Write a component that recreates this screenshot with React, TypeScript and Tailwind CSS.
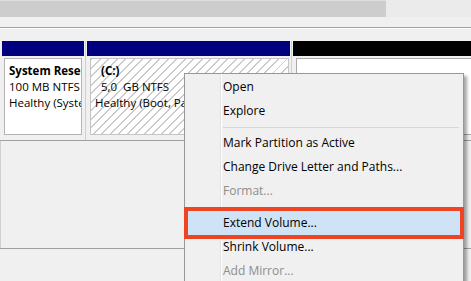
import React from 'react';

type Item = { label: string; disabled?: boolean; highlight?: boolean } | 'sep';

const menu: Item[] = [
  { label: 'Open' },
  { label: 'Explore' },
  'sep',
  { label: 'Mark Partition as Active' },
  { label: 'Change Drive Letter and Paths...' },
  { label: 'Format...', disabled: true },
  'sep',
  { label: 'Extend Volume...', highlight: true },
  { label: 'Shrink Volume...' },
  { label: 'Add Mirror...', disabled: true },
  { label: 'Delete Volume...' },
];

function ContextMenu() {
  return (
    <div className="absolute left-[184px] top-[73px] w-[280px] h-[230px] bg-[#f0f0f0] border border-[#979797] shadow-[3px_3px_3px_rgba(0,0,0,0.35)] py-px">
      {/* icon gutter line */}
      <div className="absolute left-[35px] top-0 bottom-0 w-px bg-[#e2e2e2]" />
      <div className="absolute left-[36px] top-0 bottom-0 w-px bg-white" />
      {menu.map((it, i) =>
        it === 'sep' ? (
          <div key={i} className="h-2 flex items-center pl-[38px] pr-1">
            <div className="h-px w-full bg-[#d7d7d7]" />
          </div>
        ) : (
          <div
            key={i}
            className={
              'relative h-6 flex items-center pl-[38px] text-[12px] ' +
              (it.disabled ? 'text-[#8d8d8d]' : 'text-black') +
              (it.highlight ? ' bg-[#cfe3f7]' : '')
            }
          >
            {it.label}
            {it.highlight && (
              <div className="absolute -left-px -right-px -top-1 -bottom-1 border-4 border-[#ef4424]" />
            )}
          </div>
        )
      )}
    </div>
  );
}

export default function App() {
  return (
    <div className="relative w-[471px] h-[281px] overflow-hidden bg-[#f0f0f0] font-['Open_Sans',sans-serif] leading-4 text-black">
      {/* scrollbar strip */}
      <div className="flex h-[17px]">
        <div className="w-[386px] bg-[#cdcdcd] border-t border-[#dedede]" />
        <div className="flex-1 bg-[#ebebeb]" />
      </div>
      <div className="h-[10px]" />
      <div className="h-px bg-[#a3a3a3]" />
      <div className="h-px bg-white" />
      <div className="h-[12px]" />

      {/* disk row */}
      <div className="flex h-[99px] text-[11.5px]">
        <div className="w-[2px]" />
        <div className="w-[82px] flex flex-col">
          <div className="h-[15px] bg-[#00007f]" />
          <div className="h-[2px]" />
          <div className="h-[77px] mx-[2px] bg-white border border-[#b4b4b4] pl-[4px] pt-[4px] overflow-hidden whitespace-nowrap">
            <div className="font-bold">System Reserved</div>
            <div>100 MB NTFS</div>
            <div>Healthy (System, Active, Primary Partition)</div>
          </div>
        </div>
        <div className="w-[3px] flex justify-center">
          <div className="w-px bg-[#d0d0d0]" />
        </div>
        <div className="w-[203px] flex flex-col">
          <div className="h-[15px] bg-[#00007f]" />
          <div className="h-[2px]" />
          <div className="h-[77px] ml-[3px] mr-px border border-[#c4c4c4] bg-[repeating-linear-gradient(135deg,#cbcbcb_0px,#cbcbcb_1.3px,#ffffff_1.3px,#ffffff_6px)] pl-[4px] pt-[4px] overflow-hidden whitespace-nowrap">
            <div className="pl-[6px] font-bold">(C:)</div>
            <div className="pl-[6px]">5,0&nbsp; GB NTFS</div>
            <div>Healthy (Boot, Page File, Crash Dump, Primary Partition)</div>
          </div>
        </div>
        <div className="w-[3px] flex justify-center">
          <div className="w-px bg-[#d0d0d0]" />
        </div>
        <div className="flex-1 flex flex-col">
          <div className="h-[15px] bg-black" />
          <div className="h-[2px]" />
          <div className="h-[77px] ml-[3px] -mr-px bg-white border border-[#a9a9a9]" />
        </div>
      </div>

      <div className="h-px bg-[#a0a0a0]" />
      <div className="h-[107px] border-l border-[#d0d0d0]" />
      <div className="h-px bg-[#a0a0a0]" />

      <ContextMenu />
    </div>
  );
}
